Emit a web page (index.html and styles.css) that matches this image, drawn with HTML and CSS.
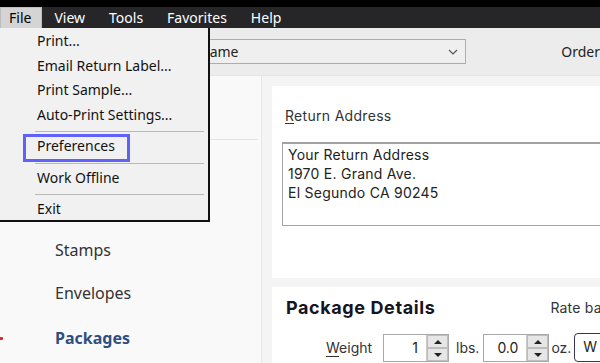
FILE: index.html
```html
<!DOCTYPE html>
<html>
<head>
<meta charset="utf-8">
<link rel="stylesheet" href="styles.css">
</head>
<body>
<div class="app">
  <div class="titlebar"></div>
  <div class="menubar">
    <span class="mitem active">File</span>
    <span class="mitem">View</span>
    <span class="mitem">Tools</span>
    <span class="mitem">Favorites</span>
    <span class="mitem">Help</span>
  </div>
  <div class="toolbar">
    <div class="select"><span class="select-text">name</span><svg class="chev" width="10" height="6" viewBox="0 0 10 6"><path d="M1 1 L5 5 L9 1" fill="none" stroke="#555" stroke-width="1.2"/></svg></div>
    <span class="order">Order</span>
  </div>
  <div class="main">
    <div class="sidebar">
      <div class="side-head"></div>
      <div class="side-list">
        <div class="side-item">Stamps</div>
        <div class="side-item">Envelopes</div>
        <div class="side-item current">Packages<span class="marker"></span></div>
      </div>
    </div>
    <div class="content">
      <div class="card card-address">
        <div class="label"><u>R</u>eturn Address</div>
        <div class="addr">
          <div>Your Return Address</div>
          <div>1970 E. Grand Ave.</div>
          <div>El Segundo CA 90245</div>
        </div>
      </div>
      <div class="card card-package">
        <div class="pk-head">
          <span class="pk-title">Package Details</span>
          <span class="rate">Rate ba</span>
        </div>
        <div class="weight-row">
          <span class="wlabel"><u>W</u>eight</span>
          <div class="spin w1"><span class="spin-val">1</span><div class="spin-btns"><span class="sb up"></span><span class="sb down"></span></div></div>
          <span class="unit lbs">lbs.</span>
          <div class="spin w2"><span class="spin-val">0.0</span><div class="spin-btns"><span class="sb up"></span><span class="sb down"></span></div></div>
          <span class="unit oz">oz.</span>
          <div class="wbox">W</div>
        </div>
      </div>
    </div>
  </div>

  <div class="dropdown">
    <div class="ditem">Print...</div>
    <div class="ditem">Email Return Label...</div>
    <div class="ditem">Print Sample...</div>
    <div class="ditem">Auto-Print Settings...</div>
    <div class="sep"></div>
    <div class="ditem focused">Preferences</div>
    <div class="sep"></div>
    <div class="ditem">Work Offline</div>
    <div class="sep"></div>
    <div class="ditem">Exit</div>
  </div>
</div>
</body>
</html>
```

FILE: styles.css
```css
* { box-sizing: border-box; }
html, body { margin: 0; padding: 0; }
body { width: 600px; height: 363px; overflow: hidden; background: #f3f3f3; }
.app { position: relative; width: 600px; height: 363px; overflow: hidden; display: flex; flex-direction: column; font-family: "Noto Sans", sans-serif; }

.titlebar { height: 7px; background: #000; flex: none; }
.menubar { height: 21px; background: #262628; display: flex; align-items: stretch; flex: none; }
.mitem { color: #fff; font-size: 14px; line-height: 21px; padding: 0 12px; }
.mitem.active { background: #d4d4d4; color: #000; padding: 0 10px 0 8px; border: 1px solid #bdbdbd; border-bottom: none; line-height: 19px; }

.toolbar { height: 48px; background: #ececec; display: flex; align-items: center; flex: none; border-bottom: 1px solid #e4e4e4; }
.select { margin-left: 150px; width: 320px; height: 25px; border: 1px solid #adadad; background: #efefef; display: flex; align-items: center; justify-content: space-between; padding: 0 7px 0 50px; }
.select-text { font-size: 14px; color: #222; }
.chev { display: block; }
.order { margin-left: 95px; font-size: 14px; color: #222; }

.main { flex: 1; display: flex; background: #f7f7f7; }
.sidebar { width: 262px; background: #f9f9f9; border-right: 1px solid #e6e6e6; display: flex; flex-direction: column; flex: none; }
.side-head { height: 64px; border-bottom: 1px solid #e3e3e3; margin-right: 3px; }
.side-list { padding-top: 89px; display: flex; flex-direction: column; }
.side-item { position: relative; height: 43px; line-height: 43px; padding-left: 55px; font-size: 16px; color: #333; }
.side-item.current { color: #2e4f80; font-weight: 700; line-height: 46px; }
.marker { position: absolute; left: -2px; top: 22px; width: 5px; height: 3px; background: #e8252b; border-radius: 1px; }

.content { flex: 1; padding: 10px 0 0 10px; display: flex; flex-direction: column; gap: 9px; background: #f4f4f4; }
.card { background: #fff; }
.card-address { height: 192px; padding: 20px 0 0 10px; font-family: "Inter", sans-serif; flex: none; }
.label { font-size: 14px; color: #333; padding-left: 3px; line-height: 20px; letter-spacing: 0.3px; }
.label u { text-underline-offset: 2px; }
.addr { margin-top: 16px; height: 84px; border: 1px solid #a3a3a3; border-top-width: 2px; border-right: none; padding: 1px 5px; font-size: 14px; line-height: 19px; color: #222; letter-spacing: 0.25px; }

.card-package { flex: 1; padding: 8px 0 0 14px; font-family: "Inter", sans-serif; }
.pk-head { display: flex; align-items: center; height: 24px; white-space: nowrap; }
.pk-title { font-size: 18px; font-weight: 700; color: #141422; letter-spacing: 0.6px; flex: none; }
.rate { margin-left: 115px; font-size: 14px; color: #333; flex: none; letter-spacing: 0.2px; }
.weight-row { display: flex; align-items: center; margin-top: 14px; padding-left: 40px; white-space: nowrap; }
.wlabel { font-size: 14px; color: #333; width: 57px; flex: none; }
.wlabel u { text-underline-offset: 3px; }
.spin { display: flex; height: 28px; border: 1px solid #a8a8a8; background: #fff; flex: none; }
.spin-val { flex: 1; text-align: right; font-size: 14px; line-height: 26px; padding-right: 8px; color: #222; }
.w1 { width: 66px; }
.w2 { width: 66px; }
.spin-btns { width: 22px; display: flex; flex-direction: column; border-left: 1px solid #c8c8c8; }
.sb { flex: 1; background: #e6e6e6; border: 1px solid #bdbdbd; position: relative; }
.sb.up::after, .sb.down::after { content: ""; position: absolute; left: 6px; top: 4px; border-left: 4px solid transparent; border-right: 4px solid transparent; }
.sb.up::after { border-bottom: 4px solid #222; }
.sb.down::after { border-top: 4px solid #222; }
.unit { font-size: 14px; color: #333; flex: none; }
.unit.lbs { padding: 0 4px 0 7px; }
.unit.oz { padding: 0 3px 0 2px; }
.wbox { height: 29px; width: 40px; border: 1.5px solid #3a3453; border-radius: 4px; font-size: 14px; line-height: 26px; padding-left: 8px; color: #222; flex: none; }

.dropdown { position: absolute; left: 0; top: 28px; width: 210px; height: 194px; background: #f1f1f1; border-right: 2px solid #111; border-bottom: 2px solid #111; padding-top: 1px; font-size: 14px; }
.ditem { position: relative; height: 24.5px; line-height: 24px; padding-left: 37px; color: #111; }
.sep { height: 1px; background: #b8b8b8; margin: 4px 4px 2px 35px; }
.ditem.focused::before { content: ""; position: absolute; left: 23px; top: 0; width: 107px; height: 28px; border: 3px solid #6060fa; box-sizing: border-box; }
```
